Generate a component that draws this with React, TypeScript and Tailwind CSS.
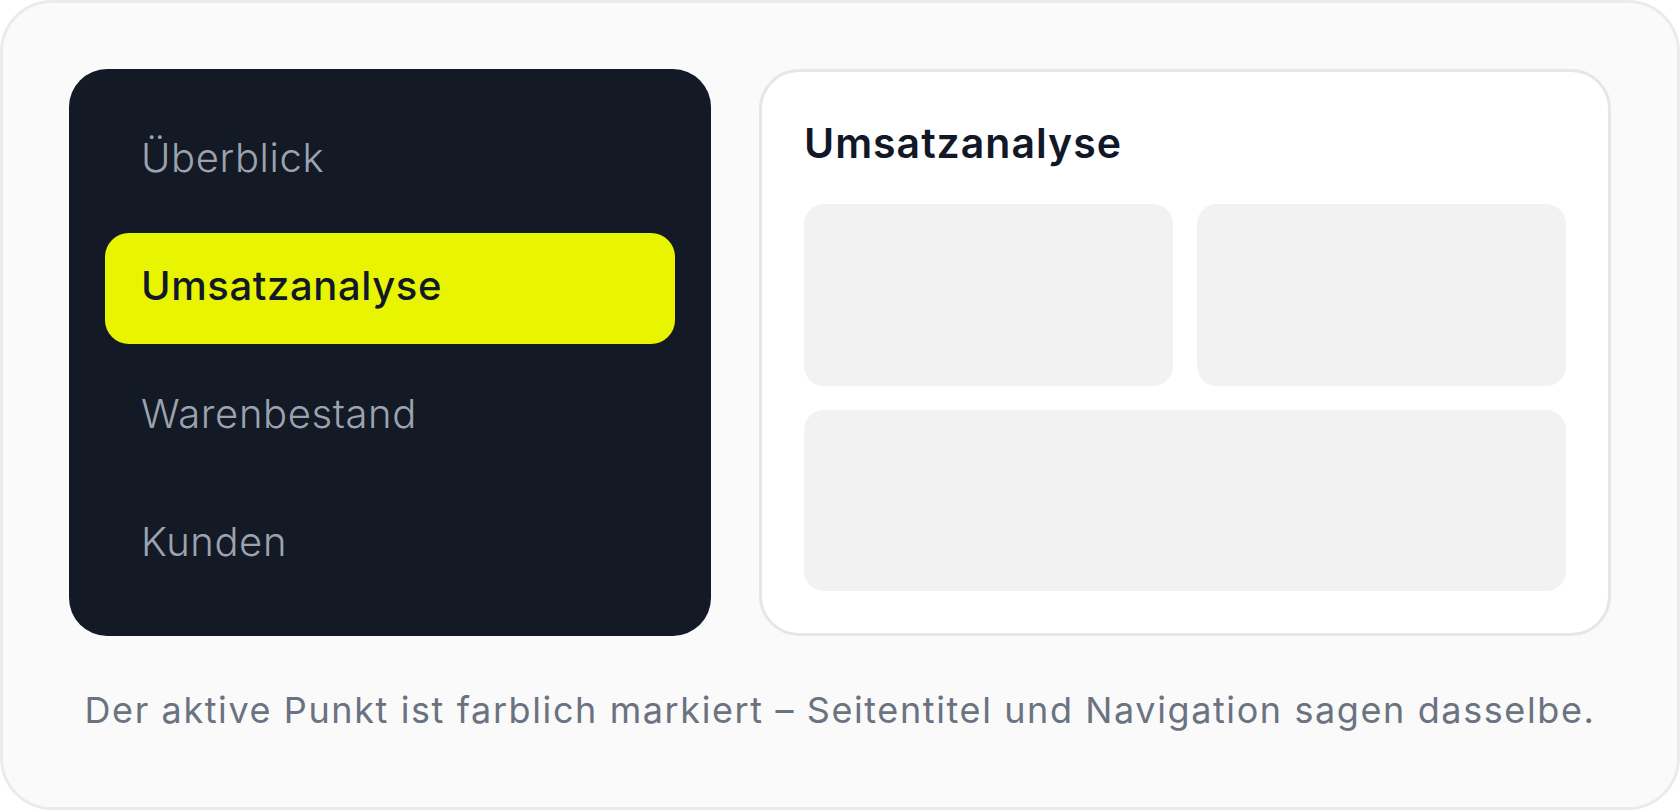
import React from "react";

const NAV_ITEMS = ["Überblick", "Umsatzanalyse", "Warenbestand", "Kunden"];
const ACTIVE = "Umsatzanalyse";

function NavItem({ label, active }: { label: string; active: boolean }) {
  return (
    <div
      className={
        active
          ? "h-[111px] shrink-0 rounded-[24px] bg-[#e9f500] px-[36px] pb-[5px] flex items-center"
          : "h-[111px] shrink-0 rounded-[24px] px-[36px] pb-[5px] flex items-center"
      }
    >
      <span
        className={
          active
            ? "text-[40px] leading-none font-medium text-[#111827] tracking-[0.6px]"
            : "text-[40px] leading-none font-light text-[#9ca3af] tracking-[0.6px]"
        }
      >
        {label}
      </span>
    </div>
  );
}

export default function App() {
  return (
    <div
      className="w-[1680px] h-[810px] bg-[#fafafa] border-[3px] border-[#eaebed] rounded-[52px] px-[66px] pt-[66px] flex flex-col"
      style={{ fontFamily: "Inter, 'Noto Sans', sans-serif" }}
    >
      <div className="flex gap-[48px] h-[567px]">
        {/* sidebar navigation */}
        <nav className="w-[642px] shrink-0 rounded-[38px] bg-[#131a26] p-[36px] flex flex-col gap-[17px]">
          {NAV_ITEMS.map((item) => (
            <NavItem key={item} label={item} active={item === ACTIVE} />
          ))}
        </nav>

        {/* page preview */}
        <section className="flex-1 bg-white border-[3px] border-[#e6e6e6] rounded-[40px] p-[42px] flex flex-col">
          <h1 className="h-[58px] leading-[58px] mb-[32px] text-[41px] font-semibold tracking-[1px] text-[#111827]">
            Umsatzanalyse
          </h1>
          <div className="flex-1 grid grid-cols-2 grid-rows-2 gap-[24px]">
            <div className="rounded-[20px] bg-[#f2f2f2]" />
            <div className="rounded-[20px] bg-[#f2f2f2]" />
            <div className="col-span-2 rounded-[20px] bg-[#f2f2f2]" />
          </div>
        </section>
      </div>

      <p className="mt-[50px] leading-[48px] text-center text-[36px] tracking-[1.6px] text-[#6b7280]">
        Der aktive Punkt ist farblich markiert – Seitentitel und Navigation sagen dasselbe.
      </p>
    </div>
  );
}
